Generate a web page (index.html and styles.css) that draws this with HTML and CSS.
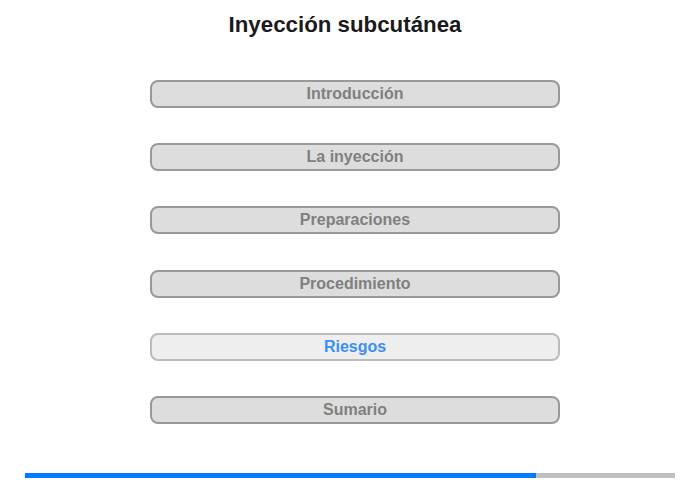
FILE: index.html
```html
<!DOCTYPE html>
<html lang="es">
<head>
  <meta charset="UTF-8">
  <meta name="viewport" content="width=device-width, initial-scale=1.0">
  <title>Inyección subcutánea</title>
  <link rel="stylesheet" href="styles.css">
</head>
<body>
  <!-- Title -->
  <h1 class="title">Inyección subcutánea</h1>

  <!-- Chapter menu -->
  <div class="menu">
    <button class="menu-item">Introducción</button>
    <button class="menu-item">La inyección</button>
    <button class="menu-item">Preparaciones</button>
    <button class="menu-item">Procedimiento</button>
    <button class="menu-item active">Riesgos</button>
    <button class="menu-item">Sumario</button>
  </div>

  <!-- Progress -->
  <div class="progress">
    <div class="progress-fill" style="width: 78.6%"></div>
  </div>
</body>
</html>
```

FILE: styles.css
```css
* {
  margin: 0;
  padding: 0;
  box-sizing: border-box;
  font-family: "Liberation Sans", Arial, sans-serif;
}

body {
  background-color: #fff;
  width: 700px;
  height: 480px;
  overflow: hidden;
}

/* Title */
.title {
  padding: 12px 10px 0 0;
  font-size: 22.3px;
  line-height: 26px;
  font-weight: bold;
  color: #1a1a1a;
  text-align: center;
}

/* Chapter menu */
.menu {
  display: flex;
  flex-direction: column;
  gap: 35.2px;
  width: 410px;
  margin: 42px 0 0 150px;
}

.menu-item {
  height: 28px;
  background-color: #dddddd;
  border: 2px solid #999;
  border-radius: 8px;
  color: #7f7f7f;
  font-size: 16px;
  font-weight: bold;
  line-height: 24px;
  text-align: center;
  cursor: pointer;
}

.menu-item.active {
  background-color: #eeeeee;
  border-color: #bbb;
  color: #3a8ff7;
}

/* Progress bar */
.progress {
  width: 650px;
  height: 5px;
  margin: 49px 0 0 25px;
  background-color: #c0c0c0;
}

.progress-fill {
  height: 100%;
  background-color: #007bff;
}
```
